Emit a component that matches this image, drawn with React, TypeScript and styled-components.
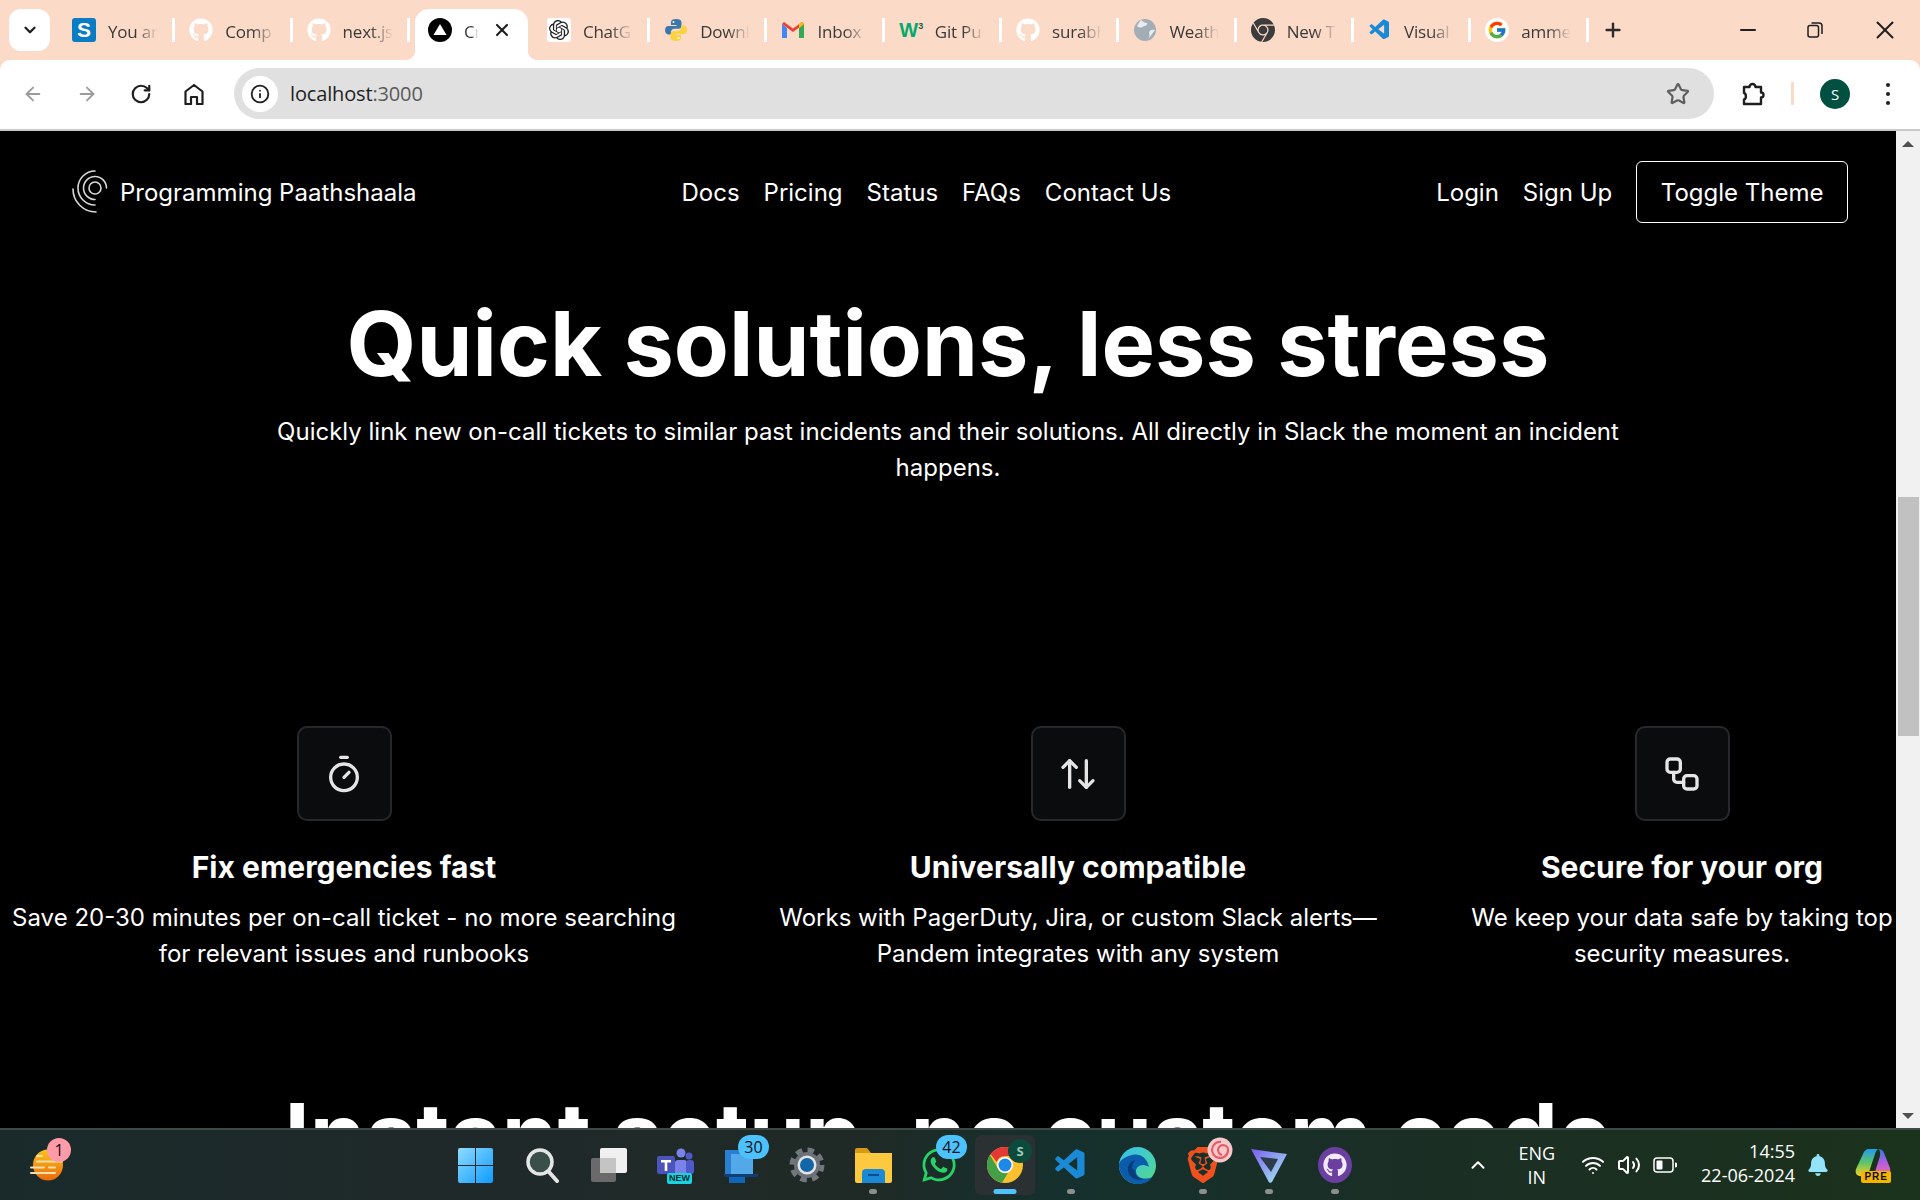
import React from 'react';
import styled, { createGlobalStyle } from 'styled-components';
import {
  ArrowLeft, ArrowRight, RotateCw, Info, Star, ChevronDown, ChevronUp, Plus, X, Minus,
  Timer, ArrowUpDown, Workflow, Wifi, Volume2,
} from 'lucide-react';
import { FaGithub, FaWhatsapp, FaBell } from 'react-icons/fa';
import { FcGoogle } from 'react-icons/fc';
import { SiOpenai, SiGooglechrome, SiBrave } from 'react-icons/si';
import { VscVscode } from 'react-icons/vsc';

const GlobalStyle = createGlobalStyle`
  html, body { margin: 0; padding: 0; background: #000; overflow: hidden; }
  * { box-sizing: border-box; }
`;

const Screen = styled.div`
  display: flex;
  flex-direction: column;
  width: 1920px;
  height: 1200px;
  overflow: hidden;
  font-family: Inter, "Liberation Sans", sans-serif;
`;

/* ---------- tab strip ---------- */
const TabStrip = styled.div`
  display: flex;
  align-items: flex-end;
  height: 60px;
  flex: none;
  background: #fcdac8;
  padding-left: 9px;
  font-family: "Open Sans", "Liberation Sans", sans-serif;
`;

const TabSearch = styled.div`
  display: flex;
  align-items: center;
  justify-content: center;
  width: 41px;
  height: 42px;
  margin: 0 8px 9px 0;
  border-radius: 12px;
  background: #fff;
  color: #1f1f1f;
`;

const Tab = styled.div<{ $active?: boolean }>`
  position: relative;
  display: flex;
  align-items: center;
  width: 117.3px;
  height: 51px;
  padding: 0 0 9px 14px;
  flex: none;
  ${p => p.$active && `
    background: #fff;
    border-radius: 14px 14px 0 0;
    margin: 0 5px;
    width: 113px;
    padding-left: 13px;
    &::before, &::after {
      content: '';
      position: absolute;
      bottom: 0;
      width: 10px;
      height: 10px;
    }
    &::before { left: -10px; background: radial-gradient(circle at 0 0, transparent 10px, #fff 10.5px); }
    &::after { right: -10px; background: radial-gradient(circle at 100% 0, transparent 10px, #fff 10.5px); }
  `}
`;

const TabLabel = styled.span<{ $w?: number }>`
  width: ${p => p.$w ?? 50}px;
  margin: 2px 0 0 12px;
  overflow: hidden;
  white-space: nowrap;
  font-size: 17px;
  letter-spacing: -0.2px;
  color: #3a3a3a;
  -webkit-mask-image: linear-gradient(90deg, #000 55%, transparent 100%);
  mask-image: linear-gradient(90deg, #000 55%, transparent 100%);
`;

const TabSep = styled.i`
  display: block;
  width: 3px;
  height: 24px;
  margin-left: auto;
  background: #fff;
  flex: none;
`;

const TabClose = styled.span`
  display: flex;
  margin-left: auto;
  margin-right: 16px;
  color: #1f1f1f;
`;

const NewTab = styled.div`
  display: flex;
  margin: 0 0 19px 13px;
  color: #2b2b2b;
`;

const WindowControls = styled.div`
  display: flex;
  align-items: center;
  gap: 47px;
  margin: 0 20px 15px auto;
  color: #1f1f1f;
`;

const FaviconTile = styled.span<{ $bg?: string; $round?: boolean }>`
  display: flex;
  align-items: center;
  justify-content: center;
  width: 24px;
  height: 24px;
  flex: none;
  background: ${p => p.$bg ?? 'transparent'};
  border-radius: ${p => (p.$round ? '50%' : '3px')};
`;

const SapLetter = styled.span`
  font: 700 21px "Liberation Sans", sans-serif;
  color: #fff;
`;

const W3Mark = styled.span`
  font: 900 20px "Liberation Sans", sans-serif;
  letter-spacing: -1px;
  color: #04aa6d;
  sup { font-size: 9px; color: #1b5e3f; margin-left: 1px; line-height: 0; }
`;

/* ---------- toolbar ---------- */
const Toolbar = styled.div`
  background: #fcdac8;
  flex: none;
`;

const ToolbarInner = styled.div`
  display: flex;
  align-items: center;
  height: 71px;
  padding: 0 0 2px 22px;
  background: #fff;
  border-radius: 10px 10px 0 0;
  border-bottom: 2px solid #c9c9c9;
`;

const NavButton = styled.span<{ $dim?: boolean; $mr?: number }>`
  display: flex;
  width: 22px;
  margin-right: ${p => p.$mr ?? 32}px;
  color: ${p => (p.$dim ? '#9b9b9b' : '#1f1f1f')};
`;

const AddressBar = styled.div`
  display: flex;
  align-items: center;
  width: 1480px;
  height: 51px;
  margin-left: 2px;
  padding: 0 24px 0 8px;
  border-radius: 26px;
  background: #e0e0e0;
  font: 400 20px "Open Sans", "Liberation Sans", sans-serif;
  letter-spacing: -0.15px;
  color: #1f1f1f;
`;

const SiteInfo = styled.span`
  display: flex;
  align-items: center;
  justify-content: center;
  width: 36px;
  height: 36px;
  margin-right: 12px;
  border-radius: 50%;
  background: #fff;
`;

const Port = styled.span`
  color: #5a5a5a;
`;

const StarSlot = styled.span`
  display: flex;
  margin-left: auto;
  color: #5f5f5f;
`;

const PuzzleSlot = styled.span`
  display: flex;
  margin-left: 28px;
`;

const ToolDivider = styled.i`
  display: block;
  width: 3px;
  height: 23px;
  margin: 0 26px 0 25px;
  background: #fcdac8;
`;

const Avatar = styled.span`
  display: flex;
  align-items: center;
  justify-content: center;
  width: 30px;
  height: 30px;
  border-radius: 50%;
  background: #005041;
  color: #fff;
  font: 400 15px "Open Sans", sans-serif;
`;

const Kebab = styled.span`
  display: flex;
  flex-direction: column;
  gap: 5px;
  margin-left: 36px;
  i { display: block; width: 4px; height: 4px; border-radius: 50%; background: #1f1f1f; }
`;

/* ---------- page ---------- */
const Viewport = styled.div`
  display: flex;
  flex: 1;
  min-height: 0;
`;

const Page = styled.main`
  width: 1896px;
  flex: none;
  overflow: hidden;
  background: #000;
  color: #fff;
`;

const TopNav = styled.nav`
  display: flex;
  align-items: center;
  justify-content: space-between;
  padding: 30px 48px 0 72px;
  font-size: 24px;
`;

const Brand = styled.div`
  display: flex;
  align-items: center;
  gap: 10px;
`;

const NavLinks = styled.div`
  display: flex;
  align-items: center;
  gap: 24px;
`;

const ThemeButton = styled.button`
  height: 62px;
  padding: 0 23.5px;
  border: 1px solid #fff;
  border-radius: 6px;
  background: #000;
  color: #fff;
  font: inherit;
`;

const BigTitle = styled.h1`
  margin: 0;
  text-align: center;
  font-size: 90px;
  line-height: 96px;
  font-weight: 700;
`;

const Hero = styled.section`
  padding-top: 73px;
`;

const HeroText = styled.p`
  width: 1400px;
  margin: 22px auto 0;
  text-align: center;
  font-size: 24px;
  line-height: 36px;
`;

const Features = styled.section`
  display: grid;
  grid-template-columns: 688px 780px 428px;
  margin-top: 240px;
`;

const Feature = styled.article<{ $textWidth: number }>`
  display: flex;
  flex-direction: column;
  align-items: center;
  text-align: center;
  p {
    width: ${p => p.$textWidth}px;
    margin: 15px 0 0;
    font-size: 24px;
    line-height: 36px;
  }
`;

const IconBox = styled.div`
  display: flex;
  align-items: center;
  justify-content: center;
  width: 95px;
  height: 95px;
  border: 2px solid #27282b;
  border-radius: 10px;
  background: #0b0c0e;
  color: #e5e5e5;
`;

const FeatureTitle = styled.h3`
  margin: 28px 0 0;
  font-size: 30px;
  line-height: 36px;
  font-weight: 700;
`;

const NextSection = styled.section`
  padding-top: 116px;
`;

/* ---------- scrollbar ---------- */
const Scrollbar = styled.div`
  display: flex;
  flex-direction: column;
  align-items: center;
  width: 24px;
  flex: none;
  padding: 10px 0 9px;
  background: #f1f1f1;
`;

const ScrollArrow = styled.i<{ $down?: boolean }>`
  display: block;
  width: 0;
  height: 0;
  border-left: 6px solid transparent;
  border-right: 6px solid transparent;
  ${p => (p.$down ? 'border-top: 6px solid #505050; margin-top: auto;' : 'border-bottom: 6px solid #505050;')}
`;

const ScrollThumb = styled.div`
  width: 21px;
  height: 239px;
  margin-top: 350px;
  background: #c1c1c1;
`;

/* ---------- taskbar ---------- */
const Taskbar = styled.footer`
  display: flex;
  align-items: center;
  height: 72px;
  flex: none;
  border-top: 2px solid #3f4a46;
  background: linear-gradient(90deg, #1a2a2a 0%, #20292a 25%, #1f2a26 45%, #15302d 55%, #1b2e24 75%, #1b321c 100%);
  color: #fff;
  font: 400 18px "Open Sans", "Liberation Sans", sans-serif;
`;

const WeatherSlot = styled.div`
  position: relative;
  display: flex;
  width: 444px;
  padding-left: 30px;
  flex: none;
`;

const AppSlot = styled.div<{ $active?: boolean }>`
  position: relative;
  display: flex;
  align-items: center;
  justify-content: center;
  width: 66px;
  height: 60px;
  flex: none;
  border-radius: 6px;
  ${p => p.$active && 'background: #2b3033; width: 60px; margin: 0 3px;'}
`;

const StartNudge = styled.span`
  display: flex;
  margin-right: 4px;
`;

const RunDot = styled.i<{ $active?: boolean }>`
  position: absolute;
  left: 50%;
  bottom: 1px;
  width: ${p => (p.$active ? '23px' : '8px')};
  height: 5px;
  border-radius: 3px;
  transform: translateX(-50%);
  background: ${p => (p.$active ? '#4fc3f7' : '#8b8f8d')};
`;

const CountBadge = styled.span<{ $pink?: boolean }>`
  position: absolute;
  top: ${p => (p.$pink ? '-11px' : '0')};
  right: ${p => (p.$pink ? 'auto' : '5px')};
  left: ${p => (p.$pink ? '47px' : 'auto')};
  display: flex;
  align-items: center;
  justify-content: center;
  min-width: ${p => (p.$pink ? '24px' : '31px')};
  height: 24px;
  border-radius: 12px;
  background: ${p => (p.$pink ? '#ff9aa8' : '#4cc2ff')};
  color: #111;
  font-size: 16px;
`;

const AvatarBadge = styled.span`
  position: absolute;
  top: 4px;
  right: 3px;
  display: flex;
  align-items: center;
  justify-content: center;
  width: 24px;
  height: 24px;
  border-radius: 50%;
  background: #0c4a3c;
  color: #9fc9bc;
  font-size: 13px;
  font-weight: 700;
`;

const Tray = styled.div`
  display: flex;
  align-items: center;
  margin-left: auto;
`;

const LangBlock = styled.div`
  margin: 0 26px 0 29px;
  text-align: center;
  line-height: 24px;
`;

const TrayIcons = styled.div`
  display: flex;
  align-items: center;
  gap: 12px;
`;

const Clock = styled.div`
  margin: 0 0 4px 24px;
  text-align: right;
  line-height: 24px;
`;

const BellSlot = styled.span`
  display: flex;
  margin: 0 26px 0 12px;
  color: #93e4fb;
`;

const CopilotSlot = styled.span`
  position: relative;
  display: flex;
  width: 36px;
  height: 35px;
  margin-right: 29px;
`;

const PreTag = styled.span`
  position: absolute;
  right: 0;
  bottom: 0;
  padding: 0 3px;
  border-radius: 2px;
  background: #f7b500;
  color: #111;
  font: 700 10px "Liberation Sans", sans-serif;
  letter-spacing: 1px;
  line-height: 12px;
`;

const NewTag = styled.span`
  position: absolute;
  left: 25px;
  bottom: 11px;
  padding: 0 2px;
  border-radius: 2px;
  background: #19d3e0;
  color: #062a2e;
  font: 700 9px "Liberation Sans", sans-serif;
  line-height: 11px;
`;

const LollipopSlot = styled.span`
  position: absolute;
  top: 2px;
  right: 3px;
  display: flex;
`;

const PurpleDisc = styled.span`
  display: flex;
  align-items: center;
  justify-content: center;
  width: 34px;
  height: 36px;
  border-radius: 50%;
  background: #6a3fa0;
  color: #f3eaff;
`;

/* ---------- drawn icons ---------- */
const LogoMark = () => (
  <svg width="38" height="44" viewBox="0 0 38 44" fill="none" stroke="#d8d8d8" strokeWidth="1.6" strokeLinecap="round">
    <circle cx="23" cy="18" r="6" />
    <path d="M34.500 18A11.500 11.500 0 1 0 23 29.500" />
    <path d="M23 1A17 17 0 0 0 23 35" />
    <path d="M1 19A23 23 0 0 0 24 42" />
  </svg>
);

const Triangle = () => (
  <svg width="24" height="24" viewBox="0 0 24 24">
    <circle cx="12" cy="12" r="12" fill="#000" />
    <path d="M12 6l6.500 11h-13z" fill="#fff" />
  </svg>
);

const PythonIcon = () => (
  <svg width="24" height="24" viewBox="0 0 24 24">
    <path d="M12 1c-3.200 0-5 1-5 3v3h5.500v1H4.500C2.500 8 1 9.600 1 12.200s1.500 4.300 3.500 4.300H7V14c0-1.900 1.500-3.300 3.400-3.300h4.100c1.700 0 3-1.300 3-3V4c0-2-2.300-3-5.500-3z" fill="#3b79ad" />
    <path d="M12 23c3.200 0 5-1 5-3v-3h-5.500v-1h8c2 0 3.500-1.600 3.500-4.200s-1.500-4.300-3.500-4.300H17V10c0 1.900-1.500 3.300-3.400 3.300H9.500c-1.700 0-3 1.300-3 3V20c0 2 2.300 3 5.500 3z" fill="#fdd13c" />
    <circle cx="9.500" cy="4" r="1" fill="#fff" />
    <circle cx="14.500" cy="20" r="1" fill="#fff" />
  </svg>
);

const GmailIcon = () => (
  <svg width="24" height="24" viewBox="0 0 24 24">
    <path d="M1 6v14h5V10z" fill="#4285f4" />
    <path d="M23 6v14h-5V10z" fill="#34a853" />
    <path d="M1 6l11 8 11-8-2-2-9 6.500L3 4z" fill="#ea4335" />
    <path d="M18 10l5-4-2-2-3 2z" fill="#fbbc04" />
  </svg>
);

const GlobeIcon = () => (
  <svg width="24" height="24" viewBox="0 0 24 24">
    <circle cx="12" cy="12" r="11" fill="#a3adb5" />
    <path d="M8 1.800c2 2 3 3 6 3.200 1 2-2 3-4 3.500-1.500 2-4.500 1-6-.5M22 12c-3-1-6 0-6 3 1 2 .5 4-1 6.500" fill="#e8ecef" />
  </svg>
);

const ChromeIcon = () => (
  <svg width="36" height="36" viewBox="0 0 36 36">
    <circle cx="18" cy="18" r="18" fill="#fbc02d" />
    <path d="M18 0a18 18 0 0 1 15.600 9H18a9 9 0 0 0-8.400 6L3.600 7A18 18 0 0 1 18 0z" fill="#e53935" />
    <path d="M3 8a18 18 0 0 0 12 27.700L21 26a9 9 0 0 1-11-6z" fill="#43a047" />
    <circle cx="18" cy="18" r="8" fill="#fff" />
    <circle cx="18" cy="18" r="6.500" fill="#1e88e5" />
  </svg>
);

const WeatherIcon = () => (
  <svg width="34" height="32" viewBox="0 0 34 32">
    <defs>
      <linearGradient id="sun" x1="0" y1="0" x2="0" y2="1">
        <stop offset="0" stopColor="#fcc419" />
        <stop offset="1" stopColor="#ea6a0c" />
      </linearGradient>
    </defs>
    <ellipse cx="18" cy="16" rx="15" ry="15.500" fill="url(#sun)" />
    <path d="M7 7h5M7 12.500h25M1 18.500h13M19 18.500h6M1 24h24" stroke="#f5e0ad" strokeWidth="2" strokeLinecap="round" />
  </svg>
);

const StartIcon = () => (
  <svg width="35" height="35" viewBox="0 0 35 35">
    <defs>
      <linearGradient id="win" x1="0" y1="0" x2="1" y2="1">
        <stop offset="0" stopColor="#8fdcff" />
        <stop offset="1" stopColor="#0d9bff" />
      </linearGradient>
    </defs>
    <path d="M0 2a2 2 0 0 1 2-2h15v17H0zM18 0h15a2 2 0 0 1 2 2v15H18zM0 18h17v17H2a2 2 0 0 1-2-2zM18 18h17v15a2 2 0 0 1-2 2H18z" fill="url(#win)" />
  </svg>
);

const SearchIcon = () => (
  <svg width="34" height="35" viewBox="0 0 34 35" fill="#3b4f4a" stroke="#e4e6e5">
    <circle cx="14" cy="14" r="12" strokeWidth="3.500" />
    <path d="M23 24l8 9" strokeWidth="4" strokeLinecap="round" />
  </svg>
);

const TaskViewIcon = () => (
  <svg width="36" height="34" viewBox="0 0 36 34">
    <rect x="0" y="10" width="25" height="24" rx="2" fill="#6a6a6a" />
    <rect x="9" y="0" width="27" height="25" rx="2" fill="#f0f0f0" />
    <rect x="9" y="10" width="16" height="15" fill="#c4c4c4" />
  </svg>
);

const TeamsIcon = () => (
  <svg width="37" height="35" viewBox="0 0 37 35">
    <circle cx="24" cy="5" r="4.500" fill="#7b83eb" />
    <circle cx="32" cy="8" r="3.500" fill="#5059c9" />
    <rect x="18" y="12" width="12" height="16" rx="3" fill="#7b83eb" />
    <rect x="29" y="12" width="8" height="14" rx="3" fill="#5059c9" />
    <rect x="0" y="8" width="18" height="18" rx="2" fill="#4b53bc" />
    <path d="M4 12h10v2.500h-3.700V23H7.700v-8.500H4z" fill="#fff" />
  </svg>
);

const OutlookIcon = () => (
  <svg width="36" height="35" viewBox="0 0 36 35">
    <path d="M2 2h28v26H2z" fill="#2a7fd1" />
    <path d="M8 6h22v22H8z" fill="#52a8e8" />
    <path d="M0 26h36l-2 3H2z" fill="#123f73" />
    <path d="M6 29h16v6H6z" fill="#0f66b8" />
  </svg>
);

const SettingsIcon = () => (
  <svg width="36" height="36" viewBox="0 0 36 36" fill="none">
    <circle cx="18" cy="18" r="15" stroke="#72777d" strokeWidth="5" strokeDasharray="6.500 5.300" />
    <circle cx="18" cy="18" r="13" fill="#6d7278" />
    <circle cx="18" cy="18" r="9.500" fill="#e4e4e4" />
    <circle cx="18" cy="18" r="7" fill="#1266a8" />
  </svg>
);

const FolderIcon = () => (
  <svg width="37" height="35" viewBox="0 0 37 35">
    <path d="M0 2a2 2 0 0 1 2-2h10l4 5h-16z" fill="#d79a14" />
    <path d="M0 5h37v28a2 2 0 0 1-2 2H2a2 2 0 0 1-2-2z" fill="#fdc93f" />
    <path d="M7 25a4 4 0 0 1 4-4h15a4 4 0 0 1 4 4v10H7z" fill="#1b8ad6" />
    <path d="M13 27h11" stroke="#0c4f8e" strokeWidth="2" />
  </svg>
);

const EdgeIcon = () => (
  <svg width="37" height="37" viewBox="0 0 37 37">
    <defs>
      <linearGradient id="edge" x1="0" y1="0" x2="1" y2="1">
        <stop offset="0" stopColor="#35c1f1" />
        <stop offset="1" stopColor="#55d98a" />
      </linearGradient>
    </defs>
    <circle cx="18.500" cy="18.500" r="18.500" fill="url(#edge)" />
    <path d="M0 18C0 28 8 37 19 37c6 0 11-2 14-7-6 3-15 2-16-5-.5-4 3-7 7-7 2 0 5 1 6 2C28 10 20 6 13 8 5 10 0 14 0 18z" fill="#0b5cab" />
    <path d="M16 24c0 5 4 8 9 8-9 3-17-3-16-11 .5-4 3-7 7-8-2 3-3 6-3 8" fill="#0a3d78" />
  </svg>
);

const PrismIcon = () => (
  <svg width="36" height="36" viewBox="0 0 36 36">
    <defs>
      <linearGradient id="prism" x1="0" y1="0" x2="1" y2="1">
        <stop offset="0" stopColor="#7a5cf0" />
        <stop offset="1" stopColor="#a5f0f0" />
      </linearGradient>
    </defs>
    <path d="M0 2l36 5-15 28a2 2 0 0 1-3.500-.5z" fill="url(#prism)" />
    <path d="M9 10l18 2-7 13z" fill="#2c3d4a" />
  </svg>
);

const Lollipop = () => (
  <svg width="26" height="26" viewBox="0 0 26 26" fill="none">
    <circle cx="13" cy="13" r="12.500" fill="#f6c9cb" />
    <path d="M14 5a8 8 0 1 0 7 9 5 5 0 1 0-6 4" stroke="#e65b64" strokeWidth="2.200" />
  </svg>
);

const BatteryIcon = () => (
  <svg width="24" height="16" viewBox="0 0 24 16" fill="none">
    <rect x="1" y="1" width="19" height="14" rx="3" stroke="#fff" strokeWidth="1.500" />
    <rect x="3.500" y="3.500" width="6" height="9" rx="1" fill="#fff" />
    <path d="M22 5.500a2 2 0 0 1 0 5z" fill="#fff" />
  </svg>
);

const CopilotIcon = () => (
  <svg width="36" height="32" viewBox="0 0 36 32">
    <defs>
      <linearGradient id="copA" x1="0" y1="0" x2="0" y2="1">
        <stop offset="0" stopColor="#1f9cf0" />
        <stop offset="0.5" stopColor="#5ec46a" />
        <stop offset="1" stopColor="#f5d020" />
      </linearGradient>
      <linearGradient id="copB" x1="0" y1="0" x2="0" y2="1">
        <stop offset="0" stopColor="#2b7fe0" />
        <stop offset="0.5" stopColor="#b35ce0" />
        <stop offset="1" stopColor="#f06ba8" />
      </linearGradient>
    </defs>
    <path d="M23 1c3 0 5 1 6 4l6 15c1 5-1 8-5 8H16c2 0 3-2 4-4l5-16c.5-2 0-7-2-7z" fill="url(#copB)" />
    <path d="M14 1h10c-2 0-3 2-4 5l-6 18c-1 3-3 4-6 4H5c-4 0-5-4-4-7L8 6c1-3 3-5 6-5z" fill="url(#copA)" />
  </svg>
);

const Puzzle = () => (
  <svg width="24" height="26" viewBox="0 0 24 26" fill="none" stroke="#1f1f1f" strokeWidth="2.400" strokeLinejoin="round">
    <path d="M2 6h5.500a3 3 0 0 1 6 0H19v5.500a2.500 2.500 0 0 1 0 5V23H2v-4.500c2.500-.5 2.500-6 0-6.500z" />
  </svg>
);

const Restore = () => (
  <svg width="16" height="16" viewBox="0 0 16 16" fill="none" stroke="#1f1f1f" strokeWidth="1.500">
    <rect x="1" y="3.500" width="10.500" height="11.500" rx="2" />
    <path d="M4.500 1H12a3 3 0 0 1 3 3v8" />
  </svg>
);

const HomeIcon = () => (
  <svg width="20" height="22" viewBox="0 0 20 22" fill="none" stroke="#1f1f1f" strokeWidth="2.200" strokeLinejoin="round">
    <path d="M1.500 21V8.500L10 2l8.500 6.500V21h-5.500v-7H7v7z" />
  </svg>
);

const leftTabs = [
  { label: 'You are', icon: <FaviconTile $bg="#0a7cc4"><SapLetter>S</SapLetter></FaviconTile> },
  { label: 'Comp', icon: <FaGithub size={24} color="#fff" /> },
  { label: 'next.js', icon: <FaGithub size={24} color="#fff" /> },
];

const rightTabs = [
  { label: 'ChatG', icon: <FaviconTile $bg="#fff"><SiOpenai size={20} color="#222" /></FaviconTile> },
  { label: 'Downl', icon: <PythonIcon /> },
  { label: 'Inbox', icon: <GmailIcon /> },
  { label: 'Git Pu', icon: <FaviconTile><W3Mark>W<sup>3</sup></W3Mark></FaviconTile> },
  { label: 'surabh', icon: <FaGithub size={24} color="#fff" /> },
  { label: 'Weath', icon: <GlobeIcon /> },
  { label: 'New T', icon: <SiGooglechrome size={24} color="#3c3c3c" /> },
  { label: 'Visual', icon: <VscVscode size={24} color="#1b8ad6" /> },
  { label: 'amme', icon: <FaviconTile $bg="#fff" $round><FcGoogle size={20} /></FaviconTile> },
];

const features = [
  {
    title: 'Fix emergencies fast',
    text: 'Save 20-30 minutes per on-call ticket - no more searching for relevant issues and runbooks',
    width: 680,
    icon: <Timer size={40} strokeWidth={2} />,
  },
  {
    title: 'Universally compatible',
    text: 'Works with PagerDuty, Jira, or custom Slack alerts— Pandem integrates with any system',
    width: 610,
    icon: <ArrowUpDown size={40} strokeWidth={2} />,
  },
  {
    title: 'Secure for your org',
    text: 'We keep your data safe by taking top security measures.',
    width: 428,
    icon: <Workflow size={40} strokeWidth={2} />,
  },
];

export default function App() {
  return (
    <Screen>
      <GlobalStyle />
      <TabStrip>
        <TabSearch><ChevronDown size={18} strokeWidth={3} /></TabSearch>
        {leftTabs.map(t => (
          <Tab key={t.label}>
            {t.icon}
            <TabLabel>{t.label}</TabLabel>
            <TabSep />
          </Tab>
        ))}
        <Tab $active>
          <Triangle />
          <TabLabel $w={14}>Create</TabLabel>
          <TabClose><X size={20} strokeWidth={2.6} /></TabClose>
        </Tab>
        {rightTabs.map(t => (
          <Tab key={t.label}>
            {t.icon}
            <TabLabel>{t.label}</TabLabel>
            <TabSep />
          </Tab>
        ))}
        <NewTab><Plus size={22} strokeWidth={2.6} /></NewTab>
        <WindowControls>
          <Minus size={24} strokeWidth={2} />
          <Restore />
          <X size={30} strokeWidth={1.6} />
        </WindowControls>
      </TabStrip>

      <Toolbar>
        <ToolbarInner>
          <NavButton $dim><ArrowLeft size={22} strokeWidth={2} /></NavButton>
          <NavButton $dim><ArrowRight size={22} strokeWidth={2} /></NavButton>
          <NavButton><RotateCw size={22} strokeWidth={2.4} /></NavButton>
          <NavButton $mr={26}><HomeIcon /></NavButton>
          <AddressBar>
            <SiteInfo><Info size={20} strokeWidth={2.2} /></SiteInfo>
            localhost<Port>:3000</Port>
            <StarSlot><Star size={24} strokeWidth={2.2} /></StarSlot>
          </AddressBar>
          <PuzzleSlot><Puzzle /></PuzzleSlot>
          <ToolDivider />
          <Avatar>S</Avatar>
          <Kebab><i /><i /><i /></Kebab>
        </ToolbarInner>
      </Toolbar>

      <Viewport>
        <Page>
          <TopNav>
            <Brand>
              <LogoMark />
              <span>Programming Paathshaala</span>
            </Brand>
            <NavLinks>
              <span>Docs</span>
              <span>Pricing</span>
              <span>Status</span>
              <span>FAQs</span>
              <span>Contact Us</span>
            </NavLinks>
            <NavLinks>
              <span>Login</span>
              <span>Sign Up</span>
              <ThemeButton>Toggle Theme</ThemeButton>
            </NavLinks>
          </TopNav>
          <Hero>
            <BigTitle>Quick solutions, less stress</BigTitle>
            <HeroText>
              Quickly link new on-call tickets to similar past incidents and their solutions. All directly in Slack the moment an incident happens.
            </HeroText>
          </Hero>
          <Features>
            {features.map(f => (
              <Feature key={f.title} $textWidth={f.width}>
                <IconBox>{f.icon}</IconBox>
                <FeatureTitle>{f.title}</FeatureTitle>
                <p>{f.text}</p>
              </Feature>
            ))}
          </Features>
          <NextSection>
            <BigTitle>Instant setup, no custom code</BigTitle>
          </NextSection>
        </Page>
        <Scrollbar>
          <ScrollArrow />
          <ScrollThumb />
          <ScrollArrow $down />
        </Scrollbar>
      </Viewport>

      <Taskbar>
        <WeatherSlot>
          <WeatherIcon />
          <CountBadge $pink>1</CountBadge>
        </WeatherSlot>
        <AppSlot><StartNudge><StartIcon /></StartNudge></AppSlot>
        <AppSlot><SearchIcon /></AppSlot>
        <AppSlot><TaskViewIcon /></AppSlot>
        <AppSlot><TeamsIcon /><NewTag>NEW</NewTag></AppSlot>
        <AppSlot><OutlookIcon /><CountBadge>30</CountBadge></AppSlot>
        <AppSlot><SettingsIcon /></AppSlot>
        <AppSlot><FolderIcon /><RunDot /></AppSlot>
        <AppSlot><FaWhatsapp size={38} color="#25d366" /><CountBadge>42</CountBadge></AppSlot>
        <AppSlot $active><ChromeIcon /><AvatarBadge>S</AvatarBadge><RunDot $active /></AppSlot>
        <AppSlot><VscVscode size={36} color="#1b8ad6" /><RunDot /></AppSlot>
        <AppSlot><EdgeIcon /></AppSlot>
        <AppSlot><SiBrave size={36} color="#f0501e" /><LollipopSlot><Lollipop /></LollipopSlot><RunDot /></AppSlot>
        <AppSlot><PrismIcon /><RunDot /></AppSlot>
        <AppSlot><PurpleDisc><FaGithub size={24} /></PurpleDisc><RunDot /></AppSlot>
        <Tray>
          <ChevronUp size={22} strokeWidth={2.2} />
          <LangBlock>ENG<br />IN</LangBlock>
          <TrayIcons>
            <Wifi size={24} />
            <Volume2 size={24} />
            <BatteryIcon />
          </TrayIcons>
          <Clock>14:55<br />22-06-2024</Clock>
          <BellSlot><FaBell size={22} /></BellSlot>
          <CopilotSlot><CopilotIcon /><PreTag>PRE</PreTag></CopilotSlot>
        </Tray>
      </Taskbar>
    </Screen>
  );
}
